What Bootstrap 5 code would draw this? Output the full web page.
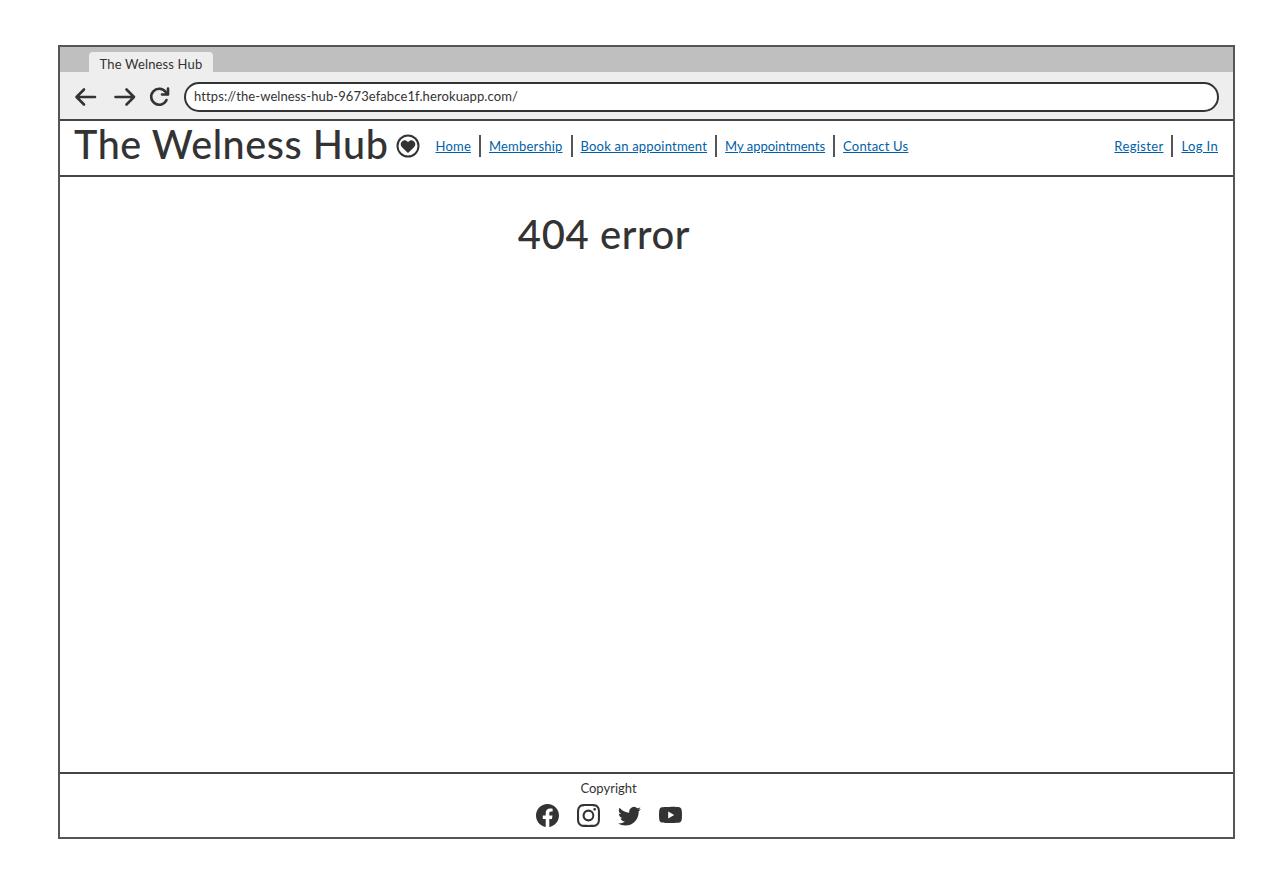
<!DOCTYPE html>
<html lang="en">

<head>
    <meta charset="UTF-8">
    <meta name="viewport" content="width=device-width, initial-scale=1.0">
    <title>The Welness Hub</title>
    <link href="https://cdn.jsdelivr.net/npm/bootstrap@5.3.0/dist/css/bootstrap.min.css" rel="stylesheet">
    <style>
        body {
            background: #fff;
            color: #333;
            font-family: "Lato", "Noto Sans", sans-serif;
        }

        .wire-frame {
            width: 1177px;
            height: 794px;
            margin: 45px 0 0 58px;
            border: 2px solid #555;
        }

        .tab-strip {
            height: 25px;
            background: #bfbfbf;
            padding-left: 29px;
        }

        .page-tab {
            width: 124px;
            height: 20px;
            margin-top: 5px;
            background: #eee;
            border-radius: 4px 4px 0 0;
            font-size: 13px;
            line-height: 25px;
            letter-spacing: .15px;
            text-align: center;
        }

        .tool-bar {
            height: 49px;
            background: #eee;
            padding: 10px 14px 7px 14px;
            border-bottom: 2px solid #444;
        }

        .tool-btn {
            flex: none;
            width: 24px;
            height: 24px;
            stroke: #333;
            fill: none;
            stroke-width: 2.6;
            stroke-linecap: round;
            stroke-linejoin: round;
        }

        .url-box {
            height: 30px;
            margin-left: 6px;
            padding-left: 8px;
            background: #fff;
            border: 2px solid #333;
            border-radius: 15px;
            font-size: 13px;
            letter-spacing: .1px;
        }

        .hub-nav {
            height: 56px;
            padding: 0 15px 4px 14px;
            border-bottom: 2px solid #444;
        }

        .hub-nav .navbar-brand {
            margin: 0 0 4px;
            padding: 0;
            color: #333;
            font-size: 39.5px;
            font-weight: 500;
            line-height: 46px;
            letter-spacing: .55px;
        }

        .heart-icon {
            width: 24px;
            height: 24px;
            margin: 0 16px 0 7px;
        }

        .hub-links .nav-link {
            padding: 0 9px;
            color: #005fa8;
            font-size: 13px;
            line-height: 22px;
            text-decoration: underline;
            letter-spacing: .2px;
        }

        .hub-links .nav-item + .nav-item {
            border-left: 2px solid #555;
        }

        .hub-links .nav-item:first-child .nav-link {
            padding-left: 0;
        }

        .hub-links .nav-item:last-child .nav-link {
            padding-right: 0;
        }

        .hub-links .my-link {
            letter-spacing: 0;
        }

        .hub-links .account-link {
            letter-spacing: .35px;
        }

        .error-area {
            height: 595px;
            padding: 36px 85px 0 0;
        }

        .error-area h1 {
            color: #333;
            font-size: 40px;
            font-weight: 500;
            line-height: 42px;
            letter-spacing: .6px;
        }

        .hub-footer {
            height: 65px;
            padding: 7px 76px 0 0;
            border-top: 2px solid #444;
            font-size: 13px;
            line-height: 15px;
        }

        .social-row {
            gap: 18px;
            margin-top: 8px;
        }

        .social-row svg {
            width: 23px;
            height: 23px;
            fill: #333;
        }
    </style>
</head>

<body>
    <div class="wire-frame d-flex flex-column">
        <div class="tab-strip">
            <div class="page-tab">The Welness Hub</div>
        </div>
        <div class="tool-bar d-flex align-items-center gap-2">
            <svg class="tool-btn" viewBox="0 0 24 24"><path d="M21 12H2.500M10 4.500 2.500 12l7.500 7.500"/></svg>
            <svg class="tool-btn ms-2" viewBox="0 0 24 24"><path d="M1.500 12H20M12.500 4.500 20 12l-7.500 7.500"/></svg>
            <svg class="tool-btn" viewBox="0 0 24 24"><path d="M20.500 15a8 8 0 1 1-1-8.200L22 9.500M22 3.500v6h-6"/></svg>
            <div class="url-box flex-grow-1 d-flex align-items-center">https://the-welness-hub-9673efabce1f.herokuapp.com/</div>
        </div>

        <nav class="navbar navbar-expand hub-nav flex-nowrap">
            <a class="navbar-brand" href="#">The Welness Hub</a>
            <svg class="heart-icon" viewBox="0 0 24 24">
                <circle cx="12" cy="12" r="10.5" fill="none" stroke="#333" stroke-width="2"/>
                <path fill="#333" d="M12 19l-6.200-6.100a3.900 3.900 0 0 1 5.500-5.500l.7.700.7-.7a3.900 3.900 0 0 1 5.500 5.500z"/>
            </svg>
            <ul class="navbar-nav hub-links me-auto">
                <li class="nav-item"><a class="nav-link" href="#">Home</a></li>
                <li class="nav-item"><a class="nav-link" href="#">Membership</a></li>
                <li class="nav-item"><a class="nav-link" href="#">Book an appointment</a></li>
                <li class="nav-item"><a class="nav-link my-link" href="#">My appointments</a></li>
                <li class="nav-item"><a class="nav-link" href="#">Contact Us</a></li>
            </ul>
            <ul class="navbar-nav hub-links">
                <li class="nav-item"><a class="nav-link account-link" href="#">Register</a></li>
                <li class="nav-item"><a class="nav-link account-link" href="#">Log In</a></li>
            </ul>
        </nav>

        <main class="error-area text-center">
            <h1 class="m-0">404 error</h1>
        </main>

        <footer class="hub-footer text-center">
            <p class="m-0">Copyright</p>
            <div class="social-row d-flex justify-content-center align-items-center">
                <svg viewBox="0 0 16 16"><path d="M16 8.049c0-4.446-3.582-8.050-8-8.050C3.580 0-.002 3.603-.002 8.050c0 4.017 2.926 7.347 6.750 7.951v-5.625h-2.030V8.050H6.750V6.275c0-2.017 1.195-3.131 3.022-3.131.876 0 1.791.157 1.791.157v1.980h-1.009c-.993 0-1.303.621-1.303 1.258v1.510h2.218l-.354 2.326H9.250V16c3.824-.604 6.750-3.934 6.750-7.951z"/></svg>
                <svg viewBox="0 0 16 16"><path d="M8 0C5.829 0 5.556.010 4.703.048 3.850.088 3.269.222 2.760.420a3.917 3.917 0 0 0-1.417.923A3.927 3.927 0 0 0 .420 2.760C.222 3.268.087 3.850.048 4.700.010 5.555 0 5.827 0 8.001c0 2.172.010 2.444.048 3.297.040.852.174 1.433.372 1.942.205.526.478.972.923 1.417.444.445.890.719 1.416.923.510.198 1.090.333 1.942.372C5.555 15.990 5.827 16 8 16s2.444-.010 3.298-.048c.851-.040 1.434-.174 1.943-.372a3.916 3.916 0 0 0 1.416-.923c.445-.445.718-.891.923-1.417.197-.509.332-1.090.372-1.942C15.990 10.445 16 10.173 16 8s-.010-2.445-.048-3.299c-.040-.851-.175-1.433-.372-1.941a3.926 3.926 0 0 0-.923-1.417A3.911 3.911 0 0 0 13.240.420c-.510-.198-1.092-.333-1.943-.372C10.443.010 10.172 0 7.998 0h.003zm-.717 1.442h.718c2.136 0 2.389.007 3.232.046.780.035 1.204.166 1.486.275.373.145.640.319.920.599.280.280.453.546.598.920.110.281.240.705.275 1.485.039.843.047 1.096.047 3.231s-.008 2.389-.047 3.232c-.035.780-.166 1.203-.275 1.485a2.470 2.470 0 0 1-.599.919c-.280.280-.546.453-.920.598-.280.110-.704.240-1.485.276-.843.038-1.096.047-3.232.047s-2.390-.009-3.233-.047c-.780-.036-1.203-.166-1.485-.276a2.478 2.478 0 0 1-.920-.598 2.480 2.480 0 0 1-.600-.920c-.109-.281-.240-.705-.275-1.485-.038-.843-.046-1.096-.046-3.233 0-2.136.008-2.388.046-3.231.036-.780.166-1.204.276-1.486.145-.373.319-.640.599-.920.280-.280.546-.453.920-.598.282-.110.705-.240 1.485-.276.738-.034 1.024-.044 2.515-.045v.002zm4.988 1.328a.960.960 0 1 0 0 1.920.960.960 0 0 0 0-1.920zm-4.270 1.122a4.109 4.109 0 1 0 0 8.217 4.109 4.109 0 0 0 0-8.217zm0 1.441a2.667 2.667 0 1 1 0 5.334 2.667 2.667 0 0 1 0-5.334z"/></svg>
                <svg viewBox="0 0 16 16"><path d="M5.026 15c6.038 0 9.341-5.003 9.341-9.334 0-.140 0-.282-.006-.422A6.685 6.685 0 0 0 16 3.542a6.658 6.658 0 0 1-1.889.518 3.301 3.301 0 0 0 1.447-1.817 6.533 6.533 0 0 1-2.087.793A3.286 3.286 0 0 0 7.875 6.030a9.325 9.325 0 0 1-6.767-3.429 3.289 3.289 0 0 0 1.018 4.382A3.323 3.323 0 0 1 .640 6.575v.045a3.288 3.288 0 0 0 2.632 3.218 3.203 3.203 0 0 1-.865.115 3.230 3.230 0 0 1-.614-.057 3.283 3.283 0 0 0 3.067 2.277A6.588 6.588 0 0 1 .780 13.580a6.320 6.320 0 0 1-.780-.045A9.344 9.344 0 0 0 5.026 15z"/></svg>
                <svg viewBox="0 0 16 16"><path d="M8.051 1.999h.089c.822.003 4.987.033 6.110.335a2.010 2.010 0 0 1 1.415 1.420c.101.380.172.883.220 1.402l.010.104.022.260.008.104c.065.914.073 1.770.074 1.957v.075c-.001.194-.010 1.108-.082 2.060l-.008.105-.009.104c-.050.572-.124 1.140-.235 1.558a2.007 2.007 0 0 1-1.415 1.420c-1.160.312-5.569.334-6.180.335h-.142c-.309 0-1.587-.006-2.927-.052l-.170-.006-.087-.004-.171-.007-.171-.007c-1.110-.049-2.167-.128-2.654-.260a2.007 2.007 0 0 1-1.415-1.419c-.111-.417-.185-.986-.235-1.558L.090 9.820l-.008-.104A31.400 31.400 0 0 1 0 7.680v-.123c.002-.215.010-.958.064-1.778l.007-.103.003-.052.008-.104.022-.260.010-.104c.048-.519.119-1.023.220-1.402a2.007 2.007 0 0 1 1.415-1.420c.487-.130 1.544-.210 2.654-.260l.170-.007.172-.006.086-.003.171-.007A99.788 99.788 0 0 1 7.858 2h.193zM6.400 5.209v4.818l4.157-2.408L6.400 5.209z"/></svg>
            </div>
        </footer>
    </div>

    <script src="https://cdn.jsdelivr.net/npm/bootstrap@5.3.0/dist/js/bootstrap.bundle.min.js"></script>
</body>

</html>
